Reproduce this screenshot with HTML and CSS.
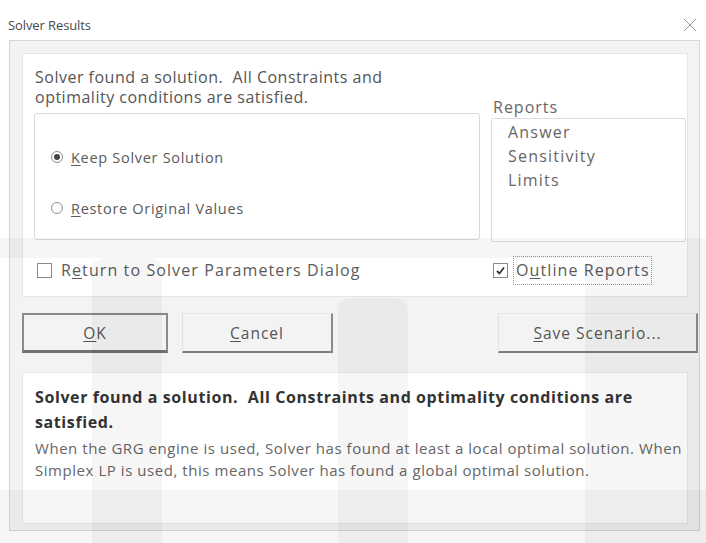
FILE: index.html
```html
<!DOCTYPE html>
<html lang="en">
<head>
<meta charset="utf-8">
<title>Solver Results</title>
<link rel="stylesheet" href="styles.css">
</head>
<body>
<div class="dialog">
  <header class="titlebar">
    <span class="title">Solver Results</span>
    <svg class="close" width="14" height="14" viewBox="0 0 14 14" aria-label="Close">
      <path d="M1 1L13 13M13 1L1 13"/>
    </svg>
  </header>

  <div class="frame">
    <section class="panel panel-top">
      <div class="main-grid">
        <div class="col-left">
          <p class="message">Solver found a solution.&nbsp; All Constraints and<br>optimality conditions are satisfied.</p>
          <div class="groupbox">
            <label class="radio">
              <span class="dot is-on"></span>
              <span><u>K</u>eep Solver Solution</span>
            </label>
            <label class="radio">
              <span class="dot"></span>
              <span><u>R</u>estore Original Values</span>
            </label>
          </div>
        </div>
        <div class="col-right">
          <div class="reports-label">Reports</div>
          <ul class="listbox">
            <li>Answer</li>
            <li>Sensitivity</li>
            <li>Limits</li>
          </ul>
        </div>
      </div>

      <div class="check-row">
        <label class="check check-return">
          <span class="box"></span>
          <span class="check-text">R<u>e</u>turn to Solver Parameters Dialog</span>
        </label>
        <label class="check check-outline">
          <span class="box">
            <svg width="11" height="11" viewBox="0 0 11 11"><path d="M2 6L4.5 8.5L9 2.5"/></svg>
          </span>
          <span class="check-text focus-ring">O<u>u</u>tline Reports</span>
        </label>
      </div>
    </section>

    <div class="button-row">
      <button class="btn btn-default"><u>O</u>K</button>
      <button class="btn btn-cancel"><u>C</u>ancel</button>
      <span class="spacer"></span>
      <button class="btn btn-save"><u>S</u>ave Scenario...</button>
    </div>

    <section class="panel panel-bottom">
      <p class="result-title">Solver found a solution.&nbsp; All Constraints and optimality conditions are satisfied.</p>
      <p class="result-detail">When the GRG engine is used, Solver has found at least a local optimal solution. When Simplex LP is used, this means Solver has found a global optimal solution.</p>
    </section>
  </div>

  <!-- faint brand watermark drawn over the dialog -->
  <div class="watermark" aria-hidden="true">
    <span class="wm wm-band-top"></span>
    <span class="wm wm-bar-a"></span>
    <span class="wm wm-bar-b"></span>
    <span class="wm wm-bar-c"></span>
    <span class="wm wm-band-bottom"></span>
  </div>
</div>
</body>
</html>
```

FILE: styles.css
```css
* { box-sizing: border-box; }

html, body {
  margin: 0;
  padding: 0;
  background: #ffffff;
}

body {
  font-family: "Open Sans", "Noto Sans", "Liberation Sans", sans-serif;
  color: #555;
}

u { text-decoration-thickness: 1px; text-underline-offset: 2px; }

.dialog {
  position: relative;
  width: 706px;
  height: 543px;
  overflow: hidden;
  background: #fff;
}

/* ---------- title bar ---------- */
.titlebar {
  height: 40px;
  display: flex;
  align-items: center;
  justify-content: space-between;
  padding: 9px 9px 0 8px;
}

.title {
  font-size: 13px;
  color: #4a4a4a;
  letter-spacing: -0.1px;
}

.close {
  fill: none;
  stroke: #999;
  stroke-width: 1;
}

/* ---------- outer frame ---------- */
.frame {
  margin: 0 6px 0 9px;
  height: 491px;
  border: 1px solid #d6d6d6;
  background: #f3f3f3;
  padding: 12px 11px 6px 12px;
  display: flex;
  flex-direction: column;
}

.panel {
  background: #fff;
  border: 1px solid #e6e6e6;
}

/* ---------- upper panel ---------- */
.panel-top {
  height: 244px;
  padding: 13px 0 0 11px;
}

.main-grid {
  display: grid;
  grid-template-columns: 446px 195px;
  column-gap: 11px;
}

.message {
  margin: 0 0 0 1px;
  font-size: 16px;
  letter-spacing: 0.5px;
  line-height: 20px;
  color: #555;
}

.groupbox {
  margin-top: 6px;
  height: 127px;
  border: 1px solid #dadada;
  border-radius: 3px;
  padding: 33px 0 0 16px;
  display: flex;
  flex-direction: column;
  gap: 31px;
}

.radio {
  display: flex;
  align-items: center;
  gap: 8px;
  height: 20px;
  font-size: 14.5px;
  letter-spacing: 0.7px;
  color: #5a5a5a;
}

.dot {
  width: 12px;
  height: 12px;
  border: 1px solid #8c8c8c;
  border-radius: 50%;
  background: #fff;
  display: flex;
  align-items: center;
  justify-content: center;
}

.dot.is-on::after {
  content: "";
  width: 6px;
  height: 6px;
  border-radius: 50%;
  background: #444;
}

.col-right {
  display: flex;
  flex-direction: column;
}

.reports-label {
  margin-top: 31px;
  padding-left: 2px;
  font-size: 16px;
  letter-spacing: 1px;
  line-height: 18px;
  color: #666;
}

.listbox {
  list-style: none;
  margin: 2px 0 0;
  height: 124px;
  border: 1px solid #dcdcdc;
  border-radius: 2px;
  padding: 1px 0 0 16px;
  font-size: 16px;
  letter-spacing: 1.2px;
  line-height: 24px;
  color: #666;
}

/* ---------- check boxes ---------- */
.check-row {
  margin-top: 14px;
  display: grid;
  grid-template-columns: 457px 195px;
  height: 28px;
}

.check {
  display: flex;
  align-items: center;
  font-size: 16px;
  letter-spacing: 1.1px;
  color: #5a5a5a;
}

.check-return { padding-left: 3px; gap: 9px; }
.check-outline { padding-left: 2px; gap: 6px; }

.box {
  width: 15px;
  height: 15px;
  border: 1px solid #8a8a8a;
  background: #fff;
  display: flex;
  align-items: center;
  justify-content: center;
}

.box svg {
  fill: none;
  stroke: #333;
  stroke-width: 1.8;
}

.focus-ring {
  outline: 1px dotted #9a9a9a;
  padding: 2px 1px 3px 2px;
  line-height: 22px;
}

/* ---------- buttons ---------- */
.button-row {
  margin: 16px -10px 0 0;
  display: flex;
  gap: 14px;
  height: 40px;
}

.spacer { flex: 1; }

.btn {
  font-family: inherit;
  font-size: 15.5px;
  letter-spacing: 1px;
  color: #555;
  background: #f3f3f3;
  border-style: solid;
  border-width: 1px 2px 2px 1px;
  border-color: #e6e6e6 #8a8a8a #7e7e7e #e0e0e0;
  padding: 0;
  height: 40px;
}

.btn-default {
  width: 146px;
  border: 2px solid #8a8a8a;
  border-bottom: 3px solid #6f6f6f;
}

.btn-cancel { width: 151px; }
.btn-save { width: 200px; }

/* ---------- lower panel ---------- */
.panel-bottom {
  margin-top: 19px;
  flex: 1;
  padding: 12px 2px 0 12px;
}

.result-title {
  margin: 0;
  font-size: 16px;
  font-weight: 700;
  letter-spacing: 0.6px;
  line-height: 25px;
  color: #333;
  max-width: 640px;
}

.result-detail {
  margin: 2px 0 0;
  font-size: 15px;
  letter-spacing: 0.55px;
  line-height: 22px;
  color: #666;
}

/* ---------- watermark ---------- */
.watermark {
  position: absolute;
  inset: 0;
  pointer-events: none;
}

.wm {
  position: absolute;
  background: rgba(0, 0, 0, 0.035);
}

.wm-band-top { left: 0; right: 0; top: 238px; height: 20px; }
.wm-bar-a { left: 92px; width: 70px; top: 258px; bottom: 0; border-radius: 12px 12px 0 0; }
.wm-bar-b { left: 338px; width: 70px; top: 298px; bottom: 0; border-radius: 12px 12px 0 0; }
.wm-bar-c { left: 585px; width: 121px; top: 258px; bottom: 0; border-radius: 20px 0 0 0; }
.wm-band-bottom { left: 0; right: 0; top: 490px; height: 53px; }
```
